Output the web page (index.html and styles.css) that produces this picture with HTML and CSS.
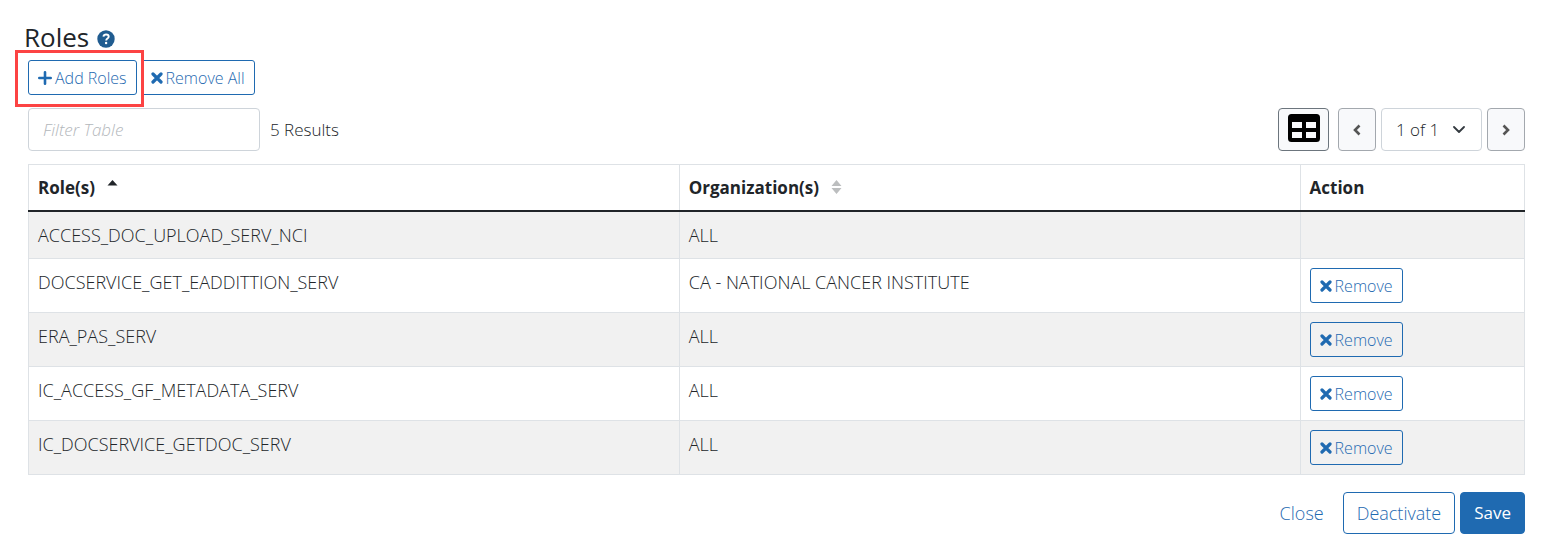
FILE: index.html
```html
<!DOCTYPE html>
<html lang="en">
<head>
<meta charset="utf-8">
<meta name="viewport" content="width=device-width, initial-scale=1">
<title>Roles</title>
<link rel="stylesheet" href="styles.css">
</head>
<body>
<svg class="sprite" aria-hidden="true">
  <symbol id="x" viewBox="0 0 12 12"><path d="M2 2l8 8M10 2l-8 8" fill="none" stroke="currentColor" stroke-width="3.2" stroke-linecap="round"/></symbol>
  <symbol id="plus" viewBox="0 0 14 14"><path d="M7 1.3v11.4M1.3 7h11.4" fill="none" stroke="currentColor" stroke-width="2.6" stroke-linecap="round"/></symbol>
</svg>
<main class="roles">
  <header class="title-row">
    <h2 class="title">Roles</h2>
    <button class="help" type="button" aria-label="Help">
      <svg viewBox="0 0 18 18" width="18" height="18"><circle cx="9" cy="9" r="8.7" fill="#205c90"/><path d="M6.4 6.6C6.7 5.2 7.7 4.5 9.1 4.5c1.5 0 2.6.9 2.6 2.2 0 1.9-2.5 1.8-2.5 3.7" fill="none" stroke="#fff" stroke-width="1.9"/><circle cx="9.1" cy="13" r="1.2" fill="#fff"/></svg>
    </button>
  </header>

  <div class="bulk-actions">
    <span class="highlight">
      <button class="btn btn-small" type="button"><svg class="icon-plus"><use href="#plus"/></svg>Add Roles</button>
    </span>
    <button class="btn btn-small" type="button"><svg class="icon-x"><use href="#x"/></svg>Remove All</button>
  </div>

  <div class="toolbar">
    <input class="filter" type="text" placeholder="Filter Table" aria-label="Filter Table">
    <span class="results">5 Results</span>
    <div class="pager">
      <button class="tool-btn view-btn" type="button" aria-label="Table view">
        <svg viewBox="0 0 32 28" width="32" height="28"><path fill-rule="evenodd" d="M3.500 0h25A3.500 3.500 0 0 1 32 3.500v21a3.500 3.500 0 0 1-3.500 3.500h-25A3.500 3.500 0 0 1 0 24.500v-21A3.500 3.500 0 0 1 3.500 0zM4 8v6h10V8zM18 8v6h10V8zM4 18v6h10v-6zM18 18v6h10v-6z"/></svg>
      </button>
      <button class="tool-btn" type="button" aria-label="Previous page">
        <svg viewBox="0 0 10 12" width="10" height="12"><path d="M7.500 1.500L3 6l4.500 4.500" fill="none" stroke="#555" stroke-width="2.600"/></svg>
      </button>
      <div class="page-picker">
        <select class="page-select" aria-label="Page"><option>1 of 1</option></select>
        <svg class="chevron" viewBox="0 0 12 8" width="12" height="8"><path d="M1 1l5 5 5-5" fill="none" stroke="#343a40" stroke-width="1.800" stroke-linecap="round" stroke-linejoin="round"/></svg>
      </div>
      <button class="tool-btn" type="button" aria-label="Next page">
        <svg viewBox="0 0 10 12" width="10" height="12"><path d="M2.500 1.500L7 6l-4.500 4.500" fill="none" stroke="#555" stroke-width="2.600"/></svg>
      </button>
    </div>
  </div>

  <table class="grid">
    <colgroup><col class="col-role"><col class="col-org"><col class="col-action"></colgroup>
    <thead>
      <tr>
        <th scope="col">Role(s)<svg class="sort" viewBox="0 0 10 14"><path d="M0 5.500L5 0l5 5.500z" fill="#212529"/></svg></th>
        <th scope="col">Organization(s)<svg class="sort" viewBox="0 0 10 14"><path d="M0 6L5 0l5 6zM0 8h10l-5 6z" fill="#bcbebf"/></svg></th>
        <th scope="col">Action</th>
      </tr>
    </thead>
    <tbody>
      <tr><td>ACCESS_DOC_UPLOAD_SERV_NCI</td><td>ALL</td><td></td></tr>
      <tr><td>DOCSERVICE_GET_EADDITTION_SERV</td><td>CA - NATIONAL CANCER INSTITUTE</td><td><button class="btn btn-small" type="button"><svg class="icon-x"><use href="#x"/></svg>Remove</button></td></tr>
      <tr><td>ERA_PAS_SERV</td><td>ALL</td><td><button class="btn btn-small" type="button"><svg class="icon-x"><use href="#x"/></svg>Remove</button></td></tr>
      <tr><td>IC_ACCESS_GF_METADATA_SERV</td><td>ALL</td><td><button class="btn btn-small" type="button"><svg class="icon-x"><use href="#x"/></svg>Remove</button></td></tr>
      <tr><td>IC_DOCSERVICE_GETDOC_SERV</td><td>ALL</td><td><button class="btn btn-small" type="button"><svg class="icon-x"><use href="#x"/></svg>Remove</button></td></tr>
    </tbody>
  </table>

  <footer class="form-actions">
    <button class="btn btn-link" type="button">Close</button>
    <button class="btn" type="button">Deactivate</button>
    <button class="btn btn-primary" type="button">Save</button>
  </footer>
</main>
</body>
</html>
```
FILE: styles.css
```css
* { box-sizing: border-box; }

body {
  margin: 0;
  background: #fff;
  color: #212529;
  font: 350 17px/26px "Open Sans", "Noto Sans", sans-serif;
}

button, input, select { font: inherit; color: inherit; margin: 0; }
button { cursor: pointer; }

.sprite { display: none; }

.roles { padding: 20px 26px 20px 28px; }

.title-row {
  display: flex;
  align-items: center;
  gap: 8px;
  height: 34px;
  margin-left: -4px;
}

.title { margin: 0; font-size: 26px; font-weight: 400; line-height: 32px; }

.help { display: flex; padding: 3px 0 0; border: 0; background: none; }

.bulk-actions { display: flex; gap: 4px; margin-top: 6px; }

.btn {
  display: inline-flex;
  align-items: center;
  justify-content: center;
  height: 42px;
  padding: 0 13px;
  border: 1px solid #1f6ab1;
  border-radius: 4px;
  background: transparent;
  color: #1f6ab1;
  font-size: 18px;
  font-weight: 330;
  white-space: nowrap;
}

.btn-small { height: 35px; padding: 0 9px; gap: 3px; font-size: 16px; border-radius: 3px; }
.btn-link { border-color: transparent; }
.btn-primary { background: #1f6ab1; color: #fff; font-size: 17px; font-weight: 400; }

.icon-x { width: 12px; height: 12px; }
.icon-plus { width: 14px; height: 14px; }

.highlight { position: relative; display: flex; }

.highlight::after {
  content: "";
  position: absolute;
  inset: -10px -7px -12px -13px;
  z-index: 1;
  border: 3px solid #fc4343;
  pointer-events: none;
}

.toolbar { display: flex; align-items: center; gap: 10px; margin-top: 13px; }

.filter {
  width: 232px;
  height: 43px;
  padding: 0 14px;
  border: 1px solid #ced4da;
  border-radius: 4px;
  background: #fff;
}

.filter::placeholder { color: #b3b7bb; font-style: italic; opacity: 1; }

.pager { display: flex; gap: 5px; margin-left: auto; }

.tool-btn {
  display: flex;
  align-items: center;
  justify-content: center;
  width: 38px;
  height: 43px;
  padding: 0;
  border: 1px solid #a3a8ae;
  border-radius: 4px;
  background: #f8f9fb;
}

.view-btn { width: 51px; margin-right: 4px; padding-bottom: 3px; border-color: #6c757d; }

.page-picker { display: grid; align-items: center; }

.page-select {
  grid-area: 1 / 1;
  width: 101px;
  height: 43px;
  padding: 0 14px;
  border: 1px solid #ced4da;
  border-radius: 4px;
  background: #fff;
  appearance: none;
}

.chevron { grid-area: 1 / 1; justify-self: end; margin-right: 17px; pointer-events: none; }

.grid {
  width: 100%;
  margin-top: 13px;
  border-collapse: collapse;
  table-layout: fixed;
}

.col-role { width: 43.5%; }
.col-org { width: 41.5%; }

.grid th, .grid td {
  padding: 9px;
  border: 1px solid #dee2e6;
  text-align: left;
  vertical-align: top;
}

.grid th { padding-top: 10px; font-weight: 700; border-bottom: 2px solid #212529; }
.grid td { font-size: 18px; font-weight: 300; line-height: 28px; }
.grid tbody tr:nth-child(odd) { background: #f1f1f1; }
.grid .btn { display: flex; }

.sort { width: 11px; height: 14px; margin-left: 12px; }

.form-actions { display: flex; justify-content: flex-end; gap: 5px; margin-top: 17px; }
```
